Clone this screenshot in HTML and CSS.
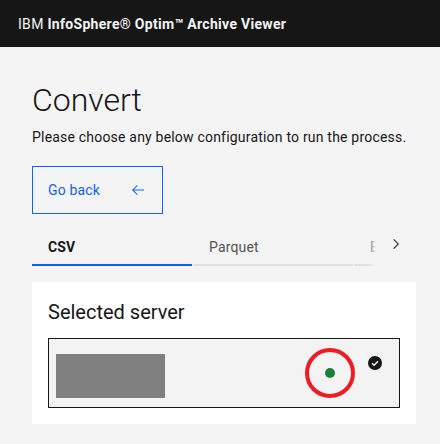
FILE: index.html
```html
<!DOCTYPE html>
<html lang="en">
<head>
<meta charset="utf-8">
<title>Convert</title>
<link rel="stylesheet" href="styles.css">
</head>
<body>
<header class="topbar">
  <span class="brand-ibm">IBM</span>&nbsp;<span class="brand-name">InfoSphere® Optim™ Archive Viewer</span>
</header>
<main class="page">
  <h1 class="title">Convert</h1>
  <p class="subtitle">Please choose any below configuration to run the process.</p>
  <button class="back-btn" type="button">
    <span>Go back</span>
    <svg class="back-icon" viewBox="0 0 16 16" width="16" height="16" aria-hidden="true"><path d="M7 3 7.7 3.7 3.9 7.5 14 7.5 14 8.5 3.9 8.5 7.7 12.3 7 13 2 8z"/></svg>
  </button>
  <div class="tabs">
    <div class="tab-list">
      <div class="tab tab-active">CSV</div>
      <div class="tab">Parquet</div>
      <div class="tab">Excel</div>
    </div>
    <div class="tab-overflow">
      <svg viewBox="0 0 16 16" width="16" height="16" aria-hidden="true"><path d="M11 8 6 13 5.3 12.3 9.6 8 5.3 3.7 6 3z"/></svg>
    </div>
  </div>
  <section class="card">
    <h2 class="card-title">Selected server</h2>
    <div class="server-tile">
      <div class="server-name"></div>
      <span class="status">
        <span class="status-dot"></span>
        <span class="ring"></span>
      </span>
      <svg class="check" viewBox="0 0 14 14" width="14" height="14" aria-hidden="true">
        <circle cx="7" cy="7" r="7" fill="#161616"/>
        <path d="M4 7.3 6.1 9.2 10 5.2" fill="none" stroke="#fff" stroke-width="1.4"/>
      </svg>
    </div>
  </section>
</main>
</body>
</html>
```

FILE: styles.css
```css
* { box-sizing: border-box; }
html, body { margin: 0; padding: 0; }
body {
  background: #f4f4f4;
  color: #161616;
  font-family: "Roboto", "Liberation Sans", sans-serif;
  width: 440px;
  height: 444px;
  overflow: hidden;
}
.topbar {
  height: 47px;
  background: #161616;
  color: #f4f4f4;
  display: flex;
  align-items: center;
  padding-left: 18px;
  font-size: 14px;
  line-height: 18px;
  letter-spacing: 0.3px;
}
.brand-ibm { font-weight: 400; }
.brand-name { font-weight: 700; }
.page {
  padding: 0 24px 0 32px;
}
.title {
  margin: 33px 0 0;
  font-size: 32px;
  line-height: 40px;
  font-weight: 300;
}
.subtitle {
  margin: 7px 0 0;
  font-size: 14px;
  line-height: 20px;
  letter-spacing: 0.2px;
  white-space: nowrap;
}
.back-btn {
  margin-top: 19px;
  width: 131px;
  height: 48px;
  border: 1px solid #0f62fe;
  background: transparent;
  color: #0f62fe;
  font-family: inherit;
  font-size: 14px;
  letter-spacing: 0.16px;
  display: flex;
  align-items: center;
  padding: 0 16px 0 15px;
}
.back-icon {
  margin-left: auto;
  fill: #0f62fe;
}
.tabs {
  margin-top: 12px;
  display: flex;
  width: 384px;
}
.tab-list {
  flex: 1;
  display: flex;
  overflow: hidden;
  white-space: nowrap;
}
.tab {
  flex: 0 0 160px;
  padding: 12px 16px 8px;
  font-size: 14px;
  line-height: 18px;
  letter-spacing: 0.16px;
  color: #525252;
  border-bottom: 2px solid #e0e0e0;
}
.tab + .tab { margin-left: 1px; }
.tab-active {
  color: #161616;
  font-weight: 700;
  border-bottom-color: #0f62fe;
}
.tab-overflow {
  position: relative;
  flex: 0 0 40px;
  display: flex;
  align-items: center;
  justify-content: center;
  padding-bottom: 4px;
  background: #f4f4f4;
}
.tab-overflow::before {
  content: "";
  position: absolute;
  left: -8px;
  top: 0;
  bottom: 0;
  width: 8px;
  background: linear-gradient(to right, rgba(244,244,244,0), #f4f4f4);
}
.tab-overflow svg { fill: #161616; }
.card {
  margin-top: 16px;
  width: 384px;
  background: #fff;
  padding: 16px;
}
.card-title {
  margin: 0;
  font-size: 20px;
  line-height: 28px;
  font-weight: 400;
}
.server-tile {
  position: relative;
  margin-top: 12px;
  height: 70px;
  border: 1px solid #161616;
  background: #f3f3f3;
  display: flex;
  align-items: center;
  padding-left: 7px;
}
.server-name {
  align-self: flex-start;
  margin-top: 15px;
  width: 109px;
  height: 44px;
  background: #808080;
}
.status {
  position: relative;
  margin: 0 64px 0 auto;
  width: 10px;
  height: 10px;
}
.status-dot {
  display: block;
  width: 10px;
  height: 10px;
  border-radius: 50%;
  background: #198038;
}
.ring {
  position: absolute;
  left: -20px;
  top: -20px;
  width: 50px;
  height: 50px;
  border: 4px solid #ed1c24;
  border-radius: 50%;
}
.check {
  position: absolute;
  top: 17px;
  right: 17px;
}
```
